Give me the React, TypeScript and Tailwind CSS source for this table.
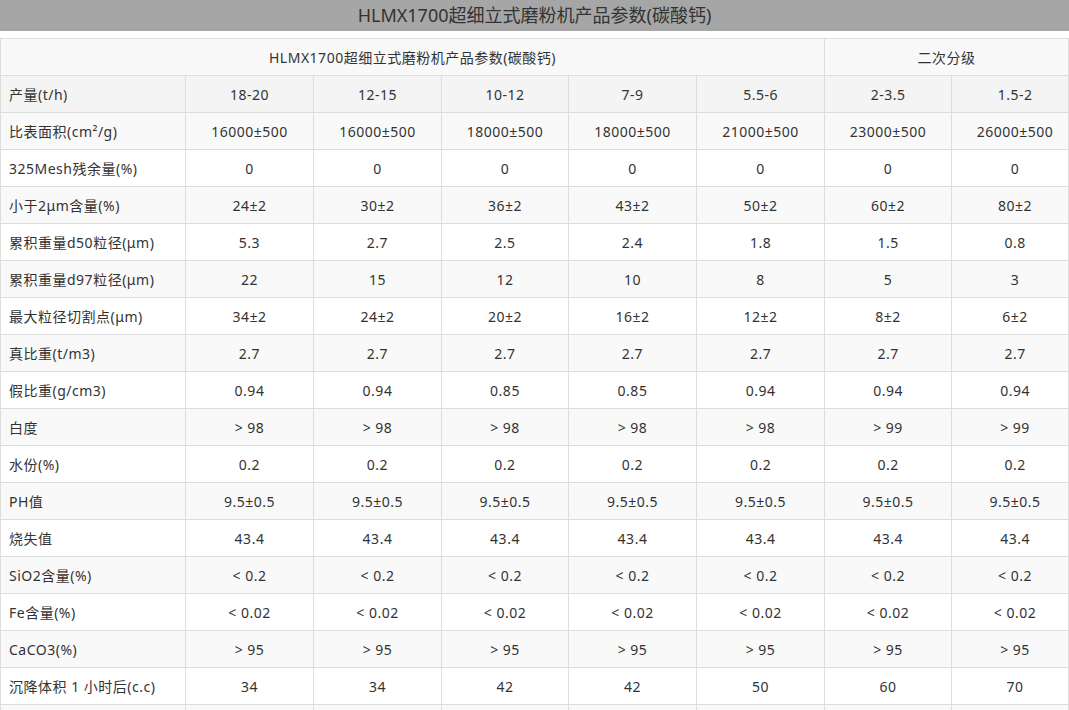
import React from "react";

const rows: [string, string[]][] = [
  ["比表面积(cm²/g)", ["16000±500", "16000±500", "18000±500", "18000±500", "21000±500", "23000±500", "26000±500"]],
  ["325Mesh残余量(%)", ["0", "0", "0", "0", "0", "0", "0"]],
  ["小于2μm含量(%)", ["24±2", "30±2", "36±2", "43±2", "50±2", "60±2", "80±2"]],
  ["累积重量d50粒径(μm)", ["5.3", "2.7", "2.5", "2.4", "1.8", "1.5", "0.8"]],
  ["累积重量d97粒径(μm)", ["22", "15", "12", "10", "8", "5", "3"]],
  ["最大粒径切割点(μm)", ["34±2", "24±2", "20±2", "16±2", "12±2", "8±2", "6±2"]],
  ["真比重(t/m3)", ["2.7", "2.7", "2.7", "2.7", "2.7", "2.7", "2.7"]],
  ["假比重(g/cm3)", ["0.94", "0.94", "0.85", "0.85", "0.94", "0.94", "0.94"]],
  ["白度", ["> 98", "> 98", "> 98", "> 98", "> 98", "> 99", "> 99"]],
  ["水份(%)", ["0.2", "0.2", "0.2", "0.2", "0.2", "0.2", "0.2"]],
  ["PH值", ["9.5±0.5", "9.5±0.5", "9.5±0.5", "9.5±0.5", "9.5±0.5", "9.5±0.5", "9.5±0.5"]],
  ["烧失值", ["43.4", "43.4", "43.4", "43.4", "43.4", "43.4", "43.4"]],
  ["SiO2含量(%)", ["< 0.2", "< 0.2", "< 0.2", "< 0.2", "< 0.2", "< 0.2", "< 0.2"]],
  ["Fe含量(%)", ["< 0.02", "< 0.02", "< 0.02", "< 0.02", "< 0.02", "< 0.02", "< 0.02"]],
  ["CaCO3(%)", ["> 95", "> 95", "> 95", "> 95", "> 95", "> 95", "> 95"]],
  ["沉降体积 1 小时后(c.c)", ["34", "34", "42", "42", "50", "60", "70"]],
  ["", ["", "", "", "", "", "", ""]],
];

const cell = "border border-[#dddddd] h-[37px] p-0 align-middle";

export default function App() {
  return (
    <div
      className="w-[1069px] bg-white text-[#333333] text-[14px]"
      style={{ fontFamily: '"Noto Sans", "Noto Sans CJK SC", sans-serif' }}
    >
      <div className="h-[31px] bg-[#a6a6a6] flex items-center justify-center text-[18px] text-[#333333]">
        HLMX1700超细立式磨粉机产品参数(碳酸钙)
      </div>
      <table className="mt-[7px] w-[1069px] table-fixed border-collapse tracking-[0.5px]">
        <colgroup>
          <col className="w-[185px]" />
          <col className="w-[128px]" />
          <col className="w-[128px]" />
          <col className="w-[127px]" />
          <col className="w-[128px]" />
          <col className="w-[128px]" />
          <col className="w-[127px]" />
          <col />
        </colgroup>
        <tbody>
          <tr className="bg-[#f9f9f9]">
            <td colSpan={6} className={`${cell} text-center`}>
              HLMX1700超细立式磨粉机产品参数(碳酸钙)
            </td>
            <td colSpan={2} className={`${cell} text-center`}>
              二次分级
            </td>
          </tr>
          <tr className="bg-[#f4f4f4]">
            <td className={`${cell} pl-[8px] text-left`}>产量(t/h)</td>
            {["18-20", "12-15", "10-12", "7-9", "5.5-6", "2-3.5", "1.5-2"].map((v, i) => (
              <td key={i} className={`${cell} text-center ${i === 6 ? "pl-[10px]" : ""}`}>
                {v}
              </td>
            ))}
          </tr>
          {rows.map(([label, vals], r) => (
            <tr key={r} className={r % 2 === 0 ? "bg-[#f9f9f9]" : "bg-white"}>
              <td className={`${cell} pl-[8px] text-left whitespace-nowrap`}>{label}</td>
              {vals.map((v, i) => (
                <td
                  key={i}
                  className={`${cell} text-center whitespace-nowrap ${i === 6 ? "pl-[10px]" : ""}`}
                >
                  {v}
                </td>
              ))}
            </tr>
          ))}
        </tbody>
      </table>
    </div>
  );
}
